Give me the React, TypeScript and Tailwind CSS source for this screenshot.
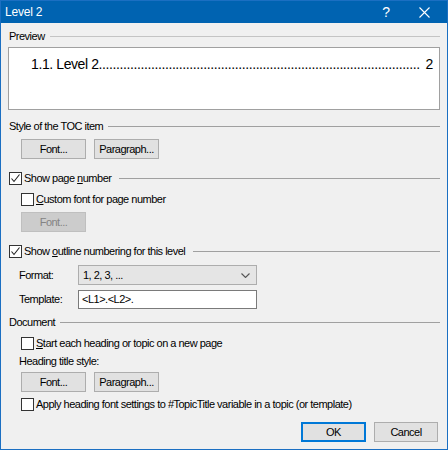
import React from "react";

const font = { fontFamily: '"Liberation Sans", Arial, sans-serif' };

function Check({ checked }: { checked?: boolean }) {
  return (
    <span className="w-[13px] h-[13px] border border-[#333333] bg-white flex items-center justify-center shrink-0">
      {checked && (
        <svg width="11" height="11" viewBox="0 0 11 11">
          <path d="M1.5 5.5 L4 8.5 L9.5 1.5" fill="none" stroke="#222222" strokeWidth="1.1" />
        </svg>
      )}
    </span>
  );
}

function Btn({ children, disabled }: { children: React.ReactNode; disabled?: boolean }) {
  return (
    <button
      type="button"
      className={
        disabled
          ? "w-[65px] h-[20px] border border-[#bfbfbf] bg-[#cccccc] text-[#838383] text-[11px] flex items-center justify-center"
          : "w-[65px] h-[20px] border border-[#adadad] bg-[#e1e1e1] text-black text-[11px] flex items-center justify-center"
      }
    >
      {children}
    </button>
  );
}

function Header({ children, line = "bg-[#a0a0a0]" }: { children: React.ReactNode; line?: string }) {
  return (
    <div className="flex items-center h-[15px] pl-[8px] pr-[7px] gap-[5px]">
      <span className="whitespace-nowrap">{children}</span>
      <span className={`flex-1 h-px ${line}`} />
    </div>
  );
}

export default function App() {
  return (
    <div
      style={font}
      className="w-[448px] h-[450px] border border-[#1b6fc2] bg-[#f0f0f0] flex flex-col text-[11px] text-black tracking-[-0.5px] overflow-hidden"
    >
      <div className="h-[22px] bg-[#0063b1] flex items-center text-white text-[12px] tracking-[-0.2px] pl-[4px] shrink-0">
        <span className="flex-1">Level 2</span>
        <span className="w-[30px] text-center text-[14px]">?</span>
        <span className="w-[46px] flex justify-center">
          <svg width="11" height="11" viewBox="0 0 11 11">
            <path d="M0.5 0.5 L10.5 10.5 M10.5 0.5 L0.5 10.5" stroke="white" strokeWidth="1.1" />
          </svg>
        </span>
      </div>

      <div className="mt-[6px]">
        <Header line="bg-[#c4c4c4] h-[2px]">Preview</Header>
      </div>
      <div className="mt-[3px] mx-[7px] h-[63px] border border-[#a0a0a0] bg-white pl-[22px] pr-[6px] pt-[7px]">
        <div className="flex items-end text-[14px] tracking-[-0.4px] leading-[18px]">
          <span className="whitespace-nowrap">1.1. Level 2</span>
          <span className="whitespace-nowrap">{".".repeat(92)}</span>
          <span className="flex-1" />
          <span className="whitespace-nowrap">2</span>
        </div>
      </div>

      <div className="mt-[9px]">
        <Header>Style of the TOC item</Header>
      </div>
      <div className="mt-[5px] pl-[20px] flex gap-[8px]">
        <Btn>Font...</Btn>
        <Btn>Paragraph...</Btn>
      </div>

      <div className="mt-[12px] flex items-center h-[15px] pl-[8px] pr-[7px]">
        <Check checked />
        <span className="ml-[2px] whitespace-nowrap">
          Show page <u className="underline underline-offset-1">n</u>umber
        </span>
        <span className="flex-1 h-px bg-[#a0a0a0] ml-[8px]" />
      </div>
      <div className="mt-[6px] flex items-center h-[15px] pl-[20px]">
        <Check />
        <span className="ml-[2px]">
          <u className="underline underline-offset-1">C</u>ustom font for page number
        </span>
      </div>
      <div className="mt-[5px] pl-[20px]">
        <Btn disabled>Font...</Btn>
      </div>

      <div className="mt-[12px] flex items-center h-[15px] pl-[8px] pr-[7px]">
        <Check checked />
        <span className="ml-[2px] whitespace-nowrap">
          Show <u className="underline underline-offset-1">o</u>utline numbering for this level
        </span>
        <span className="flex-1 h-px bg-[#a0a0a0] ml-[8px]" />
      </div>
      <div className="mt-[6px] flex items-center h-[20px] pl-[18px]">
        <span className="w-[59px]">Format:</span>
        <div className="w-[179px] h-[20px] border border-[#adadad] bg-[#e5e5e5] flex items-center pl-[4px] pr-[6px]">
          <span className="flex-1">1, 2, 3, ...</span>
          <svg width="9" height="5" viewBox="0 0 9 5">
            <path d="M0.5 0.5 L4.5 4.5 L8.5 0.5" fill="none" stroke="#555555" strokeWidth="1.1" />
          </svg>
        </div>
      </div>
      <div className="mt-[5px] flex items-center h-[19px] pl-[18px]">
        <span className="w-[59px]">Template:</span>
        <div className="w-[179px] h-[19px] border border-[#7a7a7a] bg-white flex items-center pl-[3px]">
          &lt;L1&gt;.&lt;L2&gt;.
        </div>
      </div>

      <div className="mt-[6px]">
        <Header>Document</Header>
      </div>
      <div className="mt-[6px] flex items-center h-[15px] pl-[20px]">
        <Check />
        <span className="ml-[2px]">
          <u className="underline underline-offset-1">S</u>tart each heading or topic on a new page
        </span>
      </div>
      <div className="mt-[3px] h-[15px] flex items-center pl-[18px]">Heading title style:</div>
      <div className="mt-[3px] pl-[20px] flex gap-[8px]">
        <Btn>Font...</Btn>
        <Btn>Paragraph...</Btn>
      </div>
      <div className="mt-[5px] flex items-center h-[15px] pl-[20px]">
        <Check />
        <span className="ml-[2px]">
          Apply heading font settings to #TopicTitle variable in a topic (or template)
        </span>
      </div>

      <div className="mt-[10px] flex justify-end gap-[8px] pr-[9px]">
        <button
          type="button"
          className="w-[65px] h-[20px] border-2 border-[#0078d7] bg-[#e1e1e1] text-[11px] flex items-center justify-center"
        >
          OK
        </button>
        <button
          type="button"
          className="w-[64px] h-[20px] border border-[#adadad] bg-[#e1e1e1] text-[11px] flex items-center justify-center"
        >
          Cancel
        </button>
      </div>
    </div>
  );
}
